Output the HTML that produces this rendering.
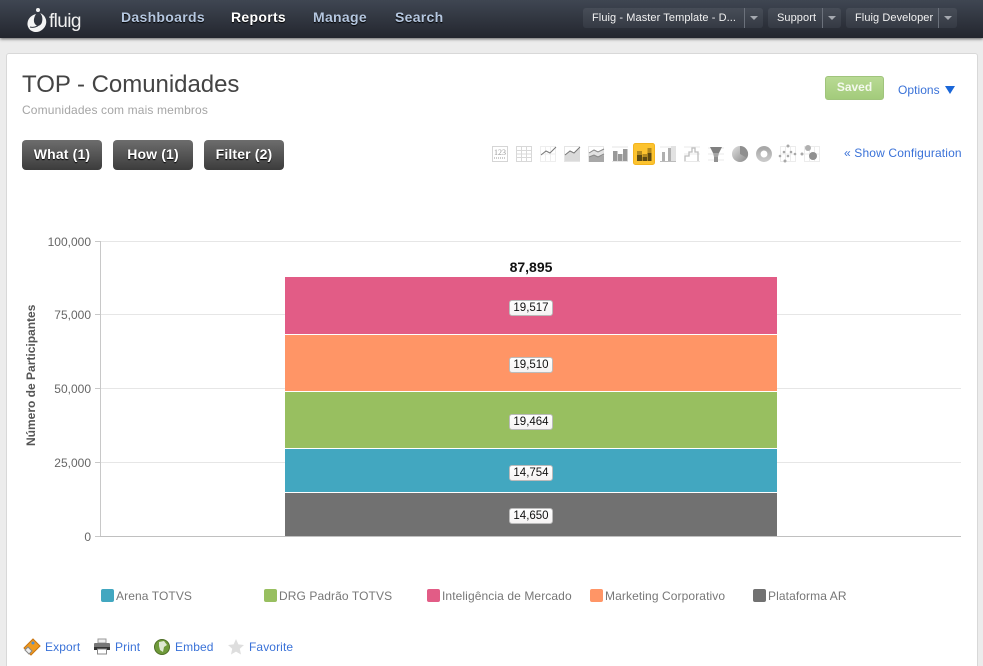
<!DOCTYPE html>
<html><head><meta charset="utf-8"><style>
*{box-sizing:border-box}
html,body{margin:0;padding:0;width:983px;height:666px;overflow:hidden}
body{position:relative;background:#ececec;font-family:"Liberation Sans",sans-serif}
.a{position:absolute;white-space:nowrap}
#top{left:0;top:0;width:983px;height:38px;background:linear-gradient(#3f4652,#23262e);box-shadow:0 1px 3px rgba(0,0,0,.6)}
.nav{top:9px;font-size:14px;font-weight:bold;color:#b5c7e0;line-height:17px;text-shadow:0 1px 1px #000;letter-spacing:.3px}
.dd{top:8px;height:20px;background:linear-gradient(#474d58,#353a44);border-radius:3px;color:#f2f2f2;font-size:11px;line-height:20px;padding-left:9px;letter-spacing:.08px}
.dd i{position:absolute;top:0;bottom:0;width:1px;background:#6b717b}
.dd b{position:absolute;top:8px;border-left:4px solid transparent;border-right:4px solid transparent;border-top:4px solid #a5a9b0}
#card{left:6px;top:53px;width:972px;height:620px;background:#fff;border:1px solid #d8d8d8;border-radius:3px}
.btn{top:140px;width:80px;height:30px;background:linear-gradient(#6d6d6d,#3c3c3c);border-radius:4px;color:#fff;font-weight:bold;font-size:14px;line-height:28px;text-align:center;text-shadow:0 1px 1px #000;letter-spacing:.15px}
.grid{left:100px;width:861px;height:1px;background:#e6e6e6}
.yl{width:91px;left:0;text-align:right;font-size:12px;color:#666;line-height:14px}
.tick{left:95px;width:6px;height:1px;background:#c8c8c8}
.bar{left:285px;width:492px}
.lb{left:509px;width:44px;height:16px;background:linear-gradient(#fff,#f5f3f3);border:1px solid #bbb;border-radius:3px;font-size:11.5px;line-height:15px;text-align:center;color:#111}
.lg{top:589px;width:13px;height:13px;border-radius:2px}
.lt{top:589px;font-size:12px;color:#777;line-height:15px;letter-spacing:.1px}
.lk{top:640px;font-size:12px;color:#3a72d8;line-height:15px;letter-spacing:.1px}
</style></head><body>
<div class="a" id="top"></div>
<svg class="a" style="left:26px;top:6px" width="24" height="29" viewBox="0 0 24 29"><circle cx="12" cy="4" r="2" fill="#f4f4f4"/><path d="M14 7c5 2 7 7 6 11s-5 8-10 8-9-4-8.500-9S6 9 10 8c-2 3-3 7-1 10s6 2 7-2 0-7-2-9z" fill="#f4f4f4"/><path d="M4 21c3 1 7 0 10-3" fill="none" stroke="#30353f" stroke-width="1"/></svg>
<div class="a" style="left:49px;top:11px;font-size:19px;color:#f0f0f0;line-height:22px;letter-spacing:-.6px">fluig</div>
<div class="a nav" style="left:121px">Dashboards</div>
<div class="a nav" style="left:231px;color:#fff">Reports</div>
<div class="a nav" style="left:313px">Manage</div>
<div class="a nav" style="left:395px">Search</div>
<div class="a dd" style="left:583px;width:180px">Fluig - Master Template - D...<i style="left:161px"></i><b style="left:167px"></b></div>
<div class="a dd" style="left:768px;width:73px">Support<i style="left:54px"></i><b style="left:60px"></b></div>
<div class="a dd" style="left:846px;width:111px">Fluig Developer<i style="left:92px"></i><b style="left:98px"></b></div>

<div class="a" id="card"></div>
<div class="a" style="left:22px;top:71px;font-size:24px;color:#444;line-height:28px;letter-spacing:-.03px">TOP - Comunidades</div>
<div class="a" style="left:22px;top:103px;font-size:12px;color:#a5a5a5;line-height:15px;letter-spacing:.14px">Comunidades com mais membros</div>
<div class="a" style="left:825px;top:76px;width:59px;height:24px;background:linear-gradient(#b9da94,#a3cb7b);border:1px solid #a0c47c;border-radius:3px;color:#f4f9ee;font-size:12px;font-weight:bold;text-align:center;line-height:21px">Saved</div>
<div class="a" style="left:898px;top:83px;font-size:12px;color:#3a72d8;line-height:15px;letter-spacing:.05px">Options</div>
<div class="a" style="left:945px;top:86px;border-left:5.500px solid transparent;border-right:5.500px solid transparent;border-top:8px solid #1a66d8"></div>

<div class="a btn" style="left:22px">What (1)</div>
<div class="a btn" style="left:113px">How (1)</div>
<div class="a btn" style="left:204px">Filter (2)</div>

<svg class="a" style="left:490px;top:142px" width="335" height="26" viewBox="0 0 335 26">
<defs>
<linearGradient id="pg" x1="0" y1="0" x2="1" y2="1"><stop offset="0" stop-color="#e0e0e0"/><stop offset="1" stop-color="#888"/></linearGradient>
<linearGradient id="dg" x1="0" y1="0" x2="0" y2="1"><stop offset="0" stop-color="#a8a8a8"/><stop offset="1" stop-color="#c8c8c8"/></linearGradient>
</defs>
<g fill="none" stroke="#d5d5d5">
<rect x="2.500" y="4.500" width="15" height="15"/>
<path d="M26.500 4.500h15v15h-15zM26.500 8.500h15M26.500 12h15M26.500 15.500h15M31.500 4.500v15M36.500 4.500v15" stroke="#d8d8d8"/>
<path d="M50.500 4.500h15v15h-15zM50.500 12h15M55.500 4.500v15M60.500 4.500v15" stroke="#eee"/>
<path d="M74.500 4.500h15v15h-15z" stroke="#e5e5e5"/>
<path d="M98.500 4.500h15v15h-15z" stroke="#e8e8e8"/>
<path d="M122 5h16M122 19.500h16" stroke="#e5e5e5"/>
<path d="M170 5h16M170 19.500h16M194 5h16M194 12h16M194 19.500h16M218 6h16M218 12h16M218 18h16" stroke="#e8e8e8"/>
<path d="M290.500 4.500h15v15h-15zM290.500 12h15M295.500 4.500v15M300.500 4.500v15M314.500 4.500h15v15h-15zM314.500 12h15M319.500 4.500v15M324.500 4.500v15" stroke="#ececec"/>
</g>
<text x="10" y="13" font-size="8" fill="#999" text-anchor="middle" font-family="Liberation Serif">123</text>
<path d="M4 16h12" stroke="#bbb" stroke-width="1.500" stroke-dasharray="1 1"/>
<path d="M51 13l5-4 4 2 6-6" fill="none" stroke="#777" stroke-width="1"/>
<path d="M75 13l5-4 4 2 6-6v14H75z" fill="#dadada"/><path d="M75 13l5-4 4 2 6-6" fill="none" stroke="#777" stroke-width="1"/>
<path d="M99 11l5-3 4 2 6-3v6l-6 3-4-2-5 3z" fill="#e2e2e2"/><path d="M99 15l5-2 4 2 6-2v7H99z" fill="#a8a8a8"/><path d="M99 11l5-3 4 2 6-3M99 15l5-2 4 2 6-3" fill="none" stroke="#888"/>
<path d="M123 9h4.500v10H123zM128 12h4.500v7H128zM133 7h4.500v12H133z" fill="#999"/>
<rect x="143.500" y="1.500" width="21" height="21" rx="2" fill="#fcc32f" stroke="#f3b41f"/>
<path d="M147 9h5v10h-5zM152.500 12h4.500v7h-4.500zM157.500 6h4v13h-4z" fill="#b38a1e"/>
<path d="M147 13h5v6h-5zM152.500 15h4.500v4h-4.500zM157.500 11h4v8h-4z" fill="#5e4a12"/>
<path d="M172 10h3v9h-3zM178 6h3v13h-3z" fill="#b0b0b0"/><path d="M181 4h5v15h-5z" fill="#e2e2e2"/><path d="M170 19.500h16" stroke="#bbb"/>
<path d="M195 19v-5h4v-4h3v-4h3v4h3v9" fill="none" stroke="#bdbdbd" stroke-width="1.300"/>
<path d="M220 5h12l-3 6h-6z" fill="#808080"/><path d="M223 11h6l-1 4h-4z" fill="#a5a5a5"/><path d="M224 15h4v5h-4z" fill="#909090"/>
<circle cx="250" cy="12" r="8" fill="url(#pg)"/><path d="M250 12V4a8 8 0 0 1 7 12z" fill="#8f8f8f"/>
<circle cx="274" cy="12" r="5.700" fill="none" stroke="url(#dg)" stroke-width="4.500"/>
<g fill="#a8a8a8"><circle cx="298" cy="4" r="1.500"/><circle cx="294" cy="10" r="1.300"/><circle cx="301" cy="10" r="1.300"/><circle cx="290" cy="14" r="1.300"/><circle cx="298" cy="14" r="1.300"/><circle cx="305" cy="12" r="1.300"/><circle cx="295" cy="19" r="1.500"/>
<circle cx="318" cy="6" r="3" fill="#b0b0b0"/><circle cx="312" cy="12" r="1.500"/><circle cx="323" cy="14" r="4" fill="#909090"/></g>
</svg>
<div class="a" style="left:844px;top:146px;font-size:12px;color:#3a72d8;line-height:15px;letter-spacing:.15px">« Show Configuration</div>

<!-- chart -->
<div class="a grid" style="top:241px"></div>
<div class="a grid" style="top:314px"></div>
<div class="a grid" style="top:388px"></div>
<div class="a grid" style="top:462px"></div>
<div class="a tick" style="top:241px"></div>
<div class="a tick" style="top:314px"></div>
<div class="a tick" style="top:388px"></div>
<div class="a tick" style="top:462px"></div>
<div class="a tick" style="top:536px"></div>
<div class="a" style="left:100px;top:241px;width:1px;height:296px;background:#c8c8c8"></div>
<div class="a" style="left:100px;top:536px;width:861px;height:1px;background:#c0c0c0"></div>
<div class="a yl" style="top:235px">100,000</div>
<div class="a yl" style="top:308px">75,000</div>
<div class="a yl" style="top:382px">50,000</div>
<div class="a yl" style="top:456px">25,000</div>
<div class="a yl" style="top:530px">0</div>
<div class="a" style="left:24px;top:446px;font-size:12px;font-weight:bold;color:#555;line-height:14px;transform-origin:0 0;transform:rotate(-90deg);width:141px">Número de Participantes</div>

<div class="a bar" style="top:277px;height:57px;background:#e25c86"></div>
<div class="a bar" style="top:335px;height:56px;background:#ff9566"></div>
<div class="a bar" style="top:392px;height:56px;background:#98bf60"></div>
<div class="a bar" style="top:449px;height:43px;background:#42a7c0"></div>
<div class="a bar" style="top:493px;height:43px;background:#717171"></div>
<div class="a" style="left:485px;width:92px;top:260px;text-align:center;font-size:14px;font-weight:bold;color:#111;line-height:15px">87,895</div>
<div class="a lb" style="top:300px">19,517</div>
<div class="a lb" style="top:357px">19,510</div>
<div class="a lb" style="top:414px">19,464</div>
<div class="a lb" style="top:465px">14,754</div>
<div class="a lb" style="top:508px">14,650</div>

<div class="a lg" style="left:101px;background:#42a7c0"></div><div class="a lt" style="left:116px">Arena TOTVS</div>
<div class="a lg" style="left:264px;background:#98bf60"></div><div class="a lt" style="left:279px">DRG Padrão TOTVS</div>
<div class="a lg" style="left:427px;background:#e25c86"></div><div class="a lt" style="left:442px">Inteligência de Mercado</div>
<div class="a lg" style="left:590px;background:#ff9566"></div><div class="a lt" style="left:605px">Marketing Corporativo</div>
<div class="a lg" style="left:753px;background:#717171"></div><div class="a lt" style="left:768px">Plataforma AR</div>

<svg class="a" style="left:23px;top:638px" width="18" height="18" viewBox="0 0 18 18"><path d="M1 10L10 1l7 7-9 9z" fill="#f09a1e" stroke="#c87410"/><circle cx="10" cy="5" r="1.500" fill="#4a90d8"/><path d="M2 12l3-3 4 4-3 3z" fill="#eee" stroke="#888"/></svg>
<svg class="a" style="left:94px;top:638px" width="16" height="17" viewBox="0 0 16 17"><path d="M4 1h8v4H4z" fill="#eee" stroke="#999"/><rect x="0" y="5" width="16" height="7" rx="1" fill="#777"/><path d="M0 9h16v3H0z" fill="#333"/><path d="M3.500 11h9v5h-9z" fill="#fff" stroke="#888"/></svg>
<svg class="a" style="left:154px;top:639px" width="16" height="16" viewBox="0 0 16 16"><circle cx="8" cy="8" r="7.500" fill="#6f9a3a" stroke="#4f6f28"/><path d="M5 3l5-1 3 4-3 2-1 5-3-2-1-4z" fill="#dfe8d4"/></svg>
<svg class="a" style="left:227px;top:638px" width="18" height="17" viewBox="0 0 18 17"><path d="M9 1l2.400 5.400 5.600.6-4.200 3.800 1.200 5.700L9 13.600 4 16.500l1.200-5.700L1 7l5.600-.6z" fill="#dedede"/></svg>
<div class="a lk" style="left:45px">Export</div>
<div class="a lk" style="left:115px">Print</div>
<div class="a lk" style="left:175px">Embed</div>
<div class="a lk" style="left:249px">Favorite</div>
</body></html>
